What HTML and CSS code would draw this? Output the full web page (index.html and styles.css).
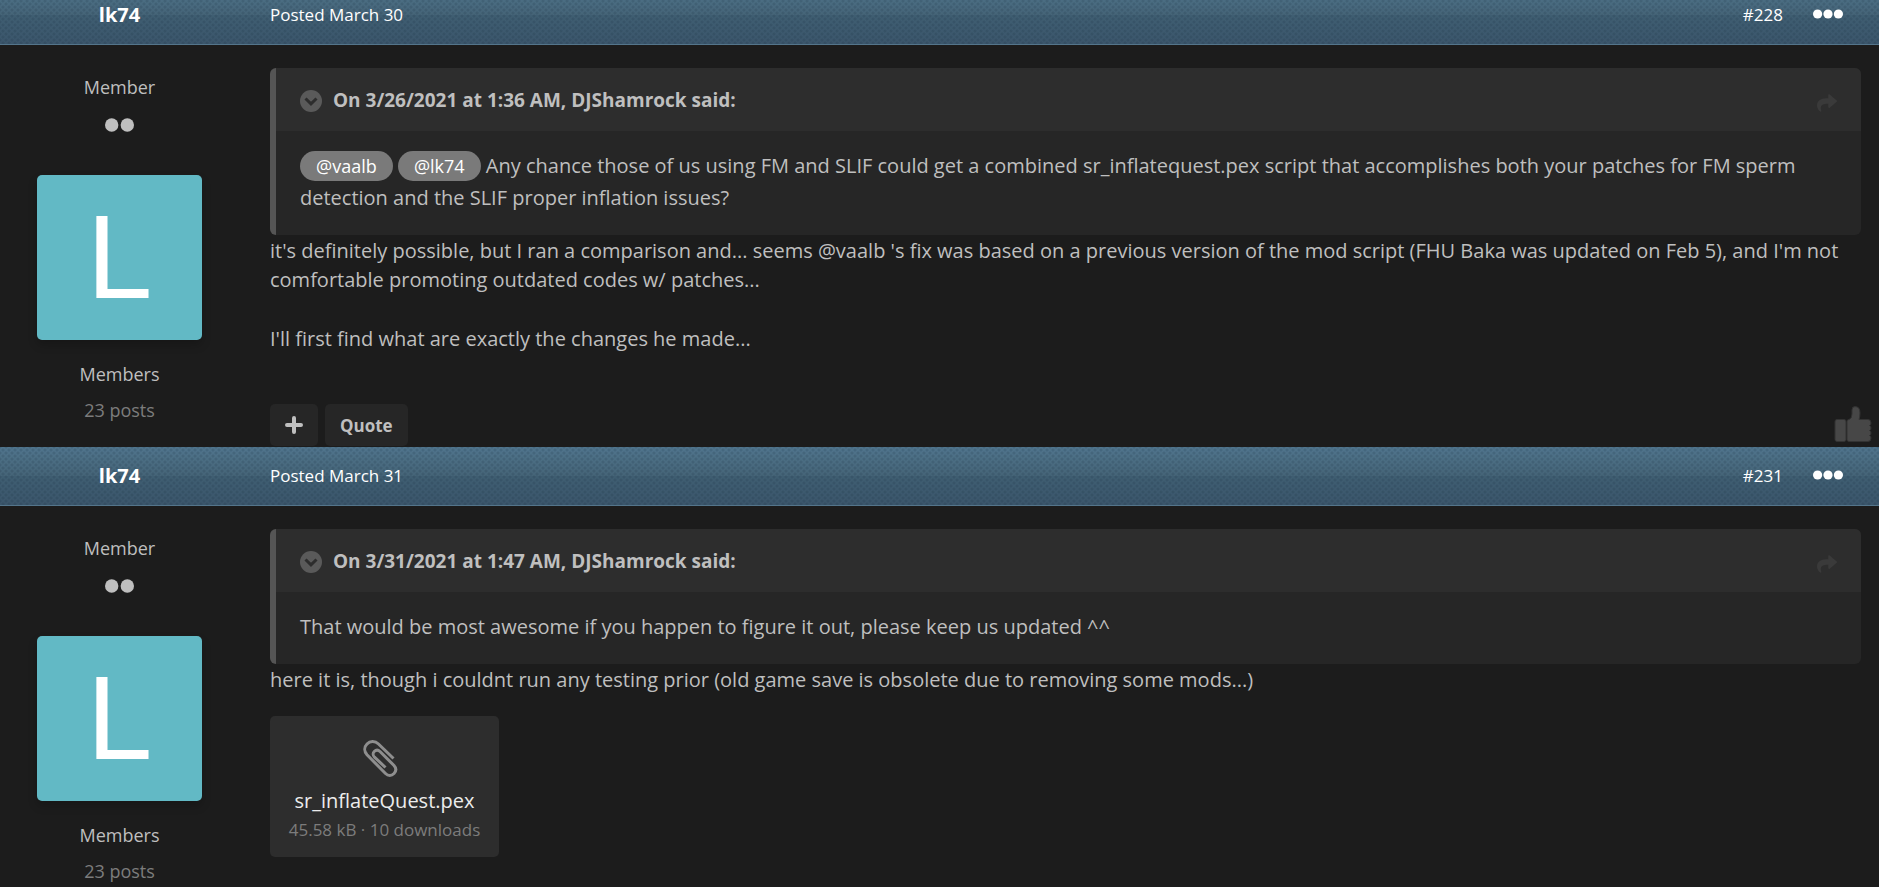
FILE: index.html
```
<!DOCTYPE html>
<html lang="en">
<head>
    <meta charset="UTF-8">
    <meta name="viewport" content="width=device-width, initial-scale=1.0">
    <title>lk74's posts</title>
    <link rel="stylesheet" href="styles.css">
</head>
<body>
    <svg class="icon-defs" aria-hidden="true">
        <symbol id="icon-chevron" viewBox="0 0 22 22">
            <circle cx="11" cy="11" r="11" fill="#5a5a5a"/>
            <path d="M5.5 8.5 L11 13.8 L16.5 8.5" fill="none" stroke="#2d2d2d" stroke-width="3"/>
        </symbol>
        <symbol id="icon-share" viewBox="0 0 512 512">
            <path d="M503.7 189.8L327.7 37.9C312.3 24.5 288 35.3 288 56v80.1C127.4 137.9 0 170.1 0 322.3c0 61.4 39.6 122.3 83.3 154.1 13.7 9.9 33.1-2.5 28.1-18.6C66.1 312.8 132.9 274.3 288 272.1V360c0 20.7 24.3 31.5 39.7 18.2l176-152c11.1-9.6 11.1-26.8 0-36.4z"/>
        </symbol>
        <symbol id="icon-dots" viewBox="0 0 30 10">
            <circle cx="4.6" cy="5" r="4.6"/>
            <circle cx="15" cy="5" r="4.6"/>
            <circle cx="25.4" cy="5" r="4.6"/>
        </symbol>
        <symbol id="icon-pips" viewBox="0 0 30 14">
            <circle cx="6.7" cy="7" r="6.7"/>
            <circle cx="22.3" cy="7" r="6.7"/>
        </symbol>
        <symbol id="icon-thumb" viewBox="0 0 38 36">
            <g stroke="#333" stroke-width="1">
                <rect x="1" y="13.5" width="11" height="22" rx="2"/>
                <path d="M13 15.5 Q13 13.5 15 13.5 Q18 12.5 18 8 V4 Q18 0.6 21 0.6 Q26 0.6 26 7 Q26 11 25 13.5 H34 Q37 13.5 37 17 Q37 19 35.5 19.5 Q37 20 37 22 Q37 24 35.5 24.5 Q37 25 37 27 Q37 29 35.5 29.5 Q37 30 37 32 Q37 35.5 34 35.5 H15 Q13 35.5 13 33.5 Z"/>
            </g>
        </symbol>
        <symbol id="icon-clip" viewBox="0 0 44 38">
            <path d="M30.5 18.5 L15.5 4 C12 0.6 7 0.8 4 4 C1 7 1 11.5 4 14.8 L22.5 33.5 C25 36 28.5 36 31 33.5 C33.3 31 33.3 28 31 25.5 L17 11.5 C15 9.7 12.8 10 11.2 11.5 C9.7 13 9.8 15.5 11.5 17.2 L22.5 27.5" fill="none" stroke="#8e8e8e" stroke-width="3"/>
        </symbol>
    </svg>

    <main class="posts">
        <article class="post">
            <header class="post-header">
                <h3 class="post-author"><a href="#">lk74</a></h3>
                <a href="#" class="post-date">Posted March 30</a>
                <a href="#" class="post-number">#228</a>
                <button type="button" class="post-menu" aria-label="More options"><svg><use href="#icon-dots"/></svg></button>
            </header>
            <div class="post-body">
                <aside class="author-panel">
                    <p class="author-title">Member</p>
                    <svg class="author-pips"><use href="#icon-pips"/></svg>
                    <a href="#" class="avatar">L</a>
                    <p class="author-group">Members</p>
                    <p class="author-count">23 posts</p>
                </aside>
                <div class="post-content">
                    <blockquote class="quote">
                        <div class="quote-header">
                            <svg class="quote-toggle"><use href="#icon-chevron"/></svg>
                            <span class="quote-cite">On 3/26/2021 at 1:36 AM, DJShamrock said:</span>
                            <a href="#" class="quote-share" aria-label="Go to post"><svg><use href="#icon-share"/></svg></a>
                        </div>
                        <p class="quote-text"><a href="#" class="mention">@vaalb</a> <a href="#" class="mention">@lk74</a> Any chance those of us using FM and SLIF could get a combined sr_inflatequest.pex script that accomplishes both your patches for FM sperm detection and the SLIF proper inflation issues?</p>
                    </blockquote>
                    <p class="post-text">it's definitely possible, but I ran a comparison and... seems @vaalb 's fix was based on a previous version of the mod script (FHU Baka was updated on Feb 5), and I'm not comfortable promoting outdated codes w/ patches...</p>
                    <p class="post-text spaced">I'll first find what are exactly the changes he made...</p>
                    <div class="post-controls">
                        <button type="button" class="control-btn multi-btn" aria-label="Multi-quote"><svg viewBox="0 0 18 18"><path d="M9 2 V16 M2 9 H16"/></svg></button>
                        <button type="button" class="control-btn">Quote</button>
                        <button type="button" class="like-btn" aria-label="Like"><svg><use href="#icon-thumb"/></svg></button>
                    </div>
                </div>
            </div>
        </article>

        <article class="post">
            <header class="post-header">
                <h3 class="post-author"><a href="#">lk74</a></h3>
                <a href="#" class="post-date">Posted March 31</a>
                <a href="#" class="post-number">#231</a>
                <button type="button" class="post-menu" aria-label="More options"><svg><use href="#icon-dots"/></svg></button>
            </header>
            <div class="post-body">
                <aside class="author-panel">
                    <p class="author-title">Member</p>
                    <svg class="author-pips"><use href="#icon-pips"/></svg>
                    <a href="#" class="avatar">L</a>
                    <p class="author-group">Members</p>
                    <p class="author-count">23 posts</p>
                </aside>
                <div class="post-content">
                    <blockquote class="quote">
                        <div class="quote-header">
                            <svg class="quote-toggle"><use href="#icon-chevron"/></svg>
                            <span class="quote-cite">On 3/31/2021 at 1:47 AM, DJShamrock said:</span>
                            <a href="#" class="quote-share" aria-label="Go to post"><svg><use href="#icon-share"/></svg></a>
                        </div>
                        <p class="quote-text">That would be most awesome if you happen to figure it out, please keep us updated ^^</p>
                    </blockquote>
                    <p class="post-text">here it is, though i couldnt run any testing prior (old game save is obsolete due to removing some mods...)</p>
                    <a href="#" class="attachment">
                        <svg class="attachment-icon"><use href="#icon-clip"/></svg>
                        <span class="attachment-name">sr_inflateQuest.pex</span>
                        <span class="attachment-meta">45.58 kB · 10 downloads</span>
                    </a>
                </div>
            </div>
        </article>
    </main>
</body>
</html>
```
FILE: styles.css
```
* {
    box-sizing: border-box;
}
body {
    margin: 0;
    background-color: #1c1c1c;
    color: #bfbfbf;
    font-family: "Segoe UI", "Open Sans", sans-serif;
    font-size: 20px;
    line-height: 29px;
}
h3, p, blockquote {
    margin: 0;
}
a {
    color: inherit;
    text-decoration: none;
}
button {
    border: none;
    padding: 0;
    font-family: inherit;
    cursor: pointer;
}
svg {
    display: block;
    fill: currentColor;
}
.icon-defs {
    display: none;
}

/* the list starts partly scrolled under the top edge */
.posts {
    margin-top: -14px;
}

.post-header {
    display: flex;
    align-items: center;
    height: 59px;
    padding: 0 36px 2px 0;
    border-bottom: 1px solid #54758b;
    color: #fff;
    font-size: 17px;
    background-image:
        radial-gradient(rgba(20, 40, 60, 0.16) 1px, transparent 2px),
        radial-gradient(rgba(20, 40, 60, 0.16) 1px, transparent 2px),
        linear-gradient(#50758d, #456477 50%, #3f5e72 50%, #3b566b);
    background-size: 6px 6px, 6px 6px, auto;
    background-position: 0 0, 3px 3px, 0 0;
}
.post-author {
    width: 239px;
    margin-right: 31px;
    text-align: center;
    font-size: 20px;
}
.post-number {
    margin-left: auto;
    margin-right: 30px;
}
.post-menu {
    background: none;
    color: #fff;
}
.post-menu svg {
    width: 30px;
    height: 10px;
}

.post-body {
    display: flex;
}
.author-panel {
    flex: none;
    display: flex;
    flex-direction: column;
    align-items: center;
    width: 239px;
    padding-top: 28px;
    margin-right: 31px;
    font-size: 18px;
}
.author-pips {
    width: 30px;
    height: 14px;
    margin: 16px 0 43px;
}
.avatar {
    width: 165px;
    height: 165px;
    border-radius: 5px;
    background-color: #62b9c5;
    box-shadow: 0 5px 10px rgba(0, 0, 0, 0.2);
    color: #fff;
    font-family: "Liberation Sans", sans-serif;
    font-size: 118px;
    line-height: 165px;
    text-align: center;
}
.author-group {
    margin-top: 20px;
}
.author-count {
    margin-top: 7px;
    color: #7c7c7c;
}

.post-content {
    flex: 1;
    padding-top: 23px;
}
.quote {
    margin-right: 18px;
    border-left: 6px solid #555;
    border-radius: 6px;
    background-color: #262626;
    overflow: hidden;
}
.quote-header {
    display: flex;
    align-items: center;
    height: 63px;
    padding: 2px 24px 0;
    background-color: #2d2d2d;
    font-size: 19px;
    font-weight: bold;
}
.quote-toggle {
    width: 22px;
    height: 22px;
    margin-right: 11px;
}
.quote-share {
    margin-left: auto;
    padding-top: 4px;
    color: #3a3a3a;
}
.quote-share svg {
    width: 20px;
    height: 20px;
}
.quote-text {
    padding: 19px 24px 22px;
    line-height: 31px;
}
.mention {
    padding: 3px 16px;
    border-radius: 16px;
    background-color: #7a7a7a;
    color: #fff;
    font-size: 18px;
}
.post-text {
    padding-top: 1px;
    margin-right: 18px;
}
.spaced {
    margin-top: 29px;
}

.post-controls {
    display: flex;
    align-items: center;
    gap: 7px;
    margin-top: 51px;
    padding: 0 7px 1px 0;
}
.control-btn {
    height: 42px;
    padding: 0 15px;
    border-radius: 5px;
    background-color: #262626;
    color: #bfbfbf;
    font-size: 17px;
    font-weight: bold;
}
.multi-btn svg {
    width: 18px;
    height: 18px;
    stroke: #bfbfbf;
    stroke-width: 4;
    stroke-linecap: round;
}
.like-btn {
    margin-left: auto;
    padding-bottom: 3px;
    background: none;
    color: #474747;
}
.like-btn svg {
    width: 38px;
    height: 36px;
}

.attachment {
    display: flex;
    flex-direction: column;
    align-items: center;
    width: 229px;
    height: 141px;
    margin-top: 22px;
    padding-top: 24px;
    border-radius: 5px;
    background-color: #2d2d2d;
}
.attachment-icon {
    width: 44px;
    height: 38px;
}
.attachment-name {
    margin-top: 9px;
    color: #ececec;
    line-height: 28px;
}
.attachment-meta {
    color: #7c7c7c;
    font-size: 17px;
}
```
